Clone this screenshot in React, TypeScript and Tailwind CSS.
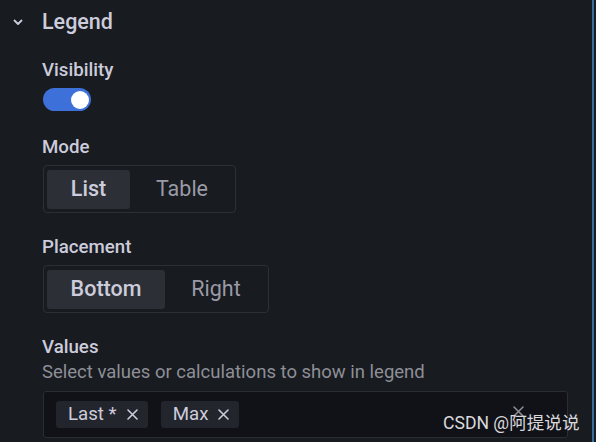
import React, { useState } from "react";

// Legend options panel
export default function App() {
  const [visible, visibleSet] = useState(true);
  const [mode, modeSet] = useState("List");
  const [place, placeSet] = useState("Bottom");
  const [values, valuesSet] = useState(["Last *", "Max"]);

  return (
    <div
      className="w-[596px] h-[442px] overflow-hidden flex bg-[#181b1f] text-[#ccccdc]"
      style={{ fontFamily: "Roboto, 'Noto Sans CJK SC', sans-serif" }}
    >
      <div className="relative w-[592px] h-full">
        {/* Header */}
        <div className="flex items-center h-[24px] mt-[10px]">
          <div className="w-[42px] flex justify-center pl-[1px] pr-[7px] pt-[1px]">
            <svg width="10" height="7" viewBox="0 0 10 7" fill="none">
              <path d="M1.5 1.5 L5 5 L8.5 1.5" stroke="#ccccdc" strokeWidth="1.8" strokeLinecap="round" strokeLinejoin="round" />
            </svg>
          </div>
          <div className="text-[21.5px] leading-[24px] font-medium">Legend</div>
        </div>

        <div className="pl-[42px] flex flex-col">
          {/* Visibility */}
          <div className="mt-[26px] text-[18.7px] leading-[20px] font-medium">Visibility</div>
          <button
            className={`mt-[8px] ml-[1px] w-[48px] h-[23px] rounded-full relative ${visible ? "bg-[#3d71d9]" : "bg-[#2c3036]"}`}
            onClick={() => visibleSet(!visible)}
          >
            <span
              className={`absolute top-[2.5px] w-[18px] h-[18px] rounded-full bg-white ${visible ? "left-[28px]" : "left-[3px]"}`}
            />
          </button>

          {/* Mode */}
          <div className="mt-[26px] text-[18.7px] leading-[20px] font-medium">Mode</div>
          <RadioGroup opts={["List", "Table"]} value={mode} onChange={modeSet} widths={["w-[83px]", "w-[100px]"]} />

          {/* Placement */}
          <div className="mt-[24px] text-[18.7px] leading-[20px] font-medium">Placement</div>
          <RadioGroup opts={["Bottom", "Right"]} value={place} onChange={placeSet} widths={["w-[118px]", "w-[98px]"]} />

          {/* Values */}
          <div className="mt-[24px] text-[18.7px] leading-[20px] font-medium">Values</div>
          <div className="mt-[5px] text-[18.5px] leading-[20px] text-[#8e8f98]">
            Select values or calculations to show in legend
          </div>
          <div className="mt-[9px] ml-[1px] w-[525px] h-[47px] rounded-[3px] border border-[#2a2d33] bg-[#111217] flex items-center pl-[12px] gap-[13px] relative">
            {values.map((v) => (
              <div key={v} className="h-[27px] flex items-center rounded-[3px] bg-[#22252b] pl-[12px] pr-[10px] gap-[10px] text-[18.7px] text-[#ccccdc]">
                <span>{v}</span>
                <button onClick={() => valuesSet(values.filter((x) => x != v))}>
                  <svg width="11" height="11" viewBox="0 0 11 11">
                    <path d="M1 1 L10 10 M10 1 L1 10" stroke="#ccccdc" strokeWidth="1.6" strokeLinecap="round" />
                  </svg>
                </button>
              </div>
            ))}
            <div className="absolute left-[469px] top-[14px]">
              <svg width="11" height="11" viewBox="0 0 11 11">
                <path d="M1 1 L10 10 M10 1 L1 10" stroke="#8e8f98" strokeWidth="1.5" strokeLinecap="round" />
              </svg>
            </div>
          </div>
        </div>

        {/* Watermark */}
        <div className="absolute left-[443px] top-[412px] text-[17.6px] leading-[22px] text-[#d9d9de]">
          CSDN @阿提说说
        </div>
      </div>
      <div className="w-[2px] h-full bg-[#3a6d9c]" />
      <div className="w-[2px] h-full bg-[#181b1f]" />
    </div>
  );
}

function RadioGroup({ opts, value, onChange, widths }: {
  opts: string[],
  value: string,
  onChange: (v: string) => void,
  widths: string[]
}) {
  return (
    <div className="mt-[8px] ml-[1px] self-start h-[48px] rounded-[4px] border border-[#2c3036] flex items-center px-[3px] gap-[2px]">
      {opts.map((o, idx) => (
        <button
          key={o}
          onClick={() => onChange(o)}
          className={`${widths[idx]} h-[39px] rounded-[3px] text-[21.5px] ${value == o ? "bg-[#2c3036] text-[#ccccdc] font-medium" : "text-[#9a9aa6]"}`}
        >
          {o}
        </button>
      ))}
    </div>
  );
}
